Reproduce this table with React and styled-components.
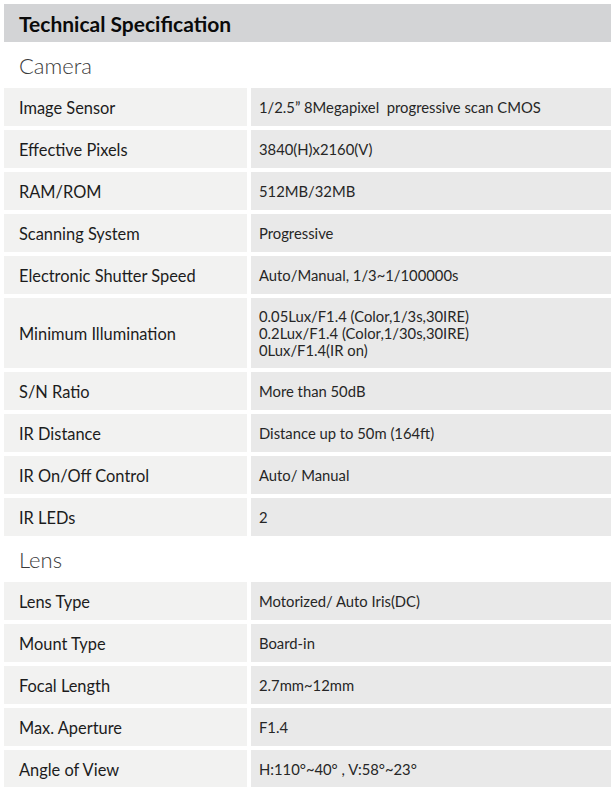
import React from "react";
import styled, { createGlobalStyle } from "styled-components";

const Global = createGlobalStyle`
  html, body { margin: 0; padding: 0; background: #ffffff; }
  body { font-family: Lato, "Open Sans", sans-serif; }
`;

const Page = styled.div`
  width: 611px;
  padding: 4px 0 0 4px;
  box-sizing: border-box;
  display: flex;
  flex-direction: column;
  gap: 4px;
`;

const TitleBar = styled.h1`
  margin: 0;
  height: 38px;
  background: #d3d4d6;
  display: flex;
  align-items: center;
  padding-left: 15px;
  font-family: Lato, sans-serif;
  font-weight: 700;
  font-size: 21px;
  color: #0a0a0a;
`;

const Section = styled.h2`
  margin: 0;
  height: 38px;
  display: flex;
  align-items: center;
  padding-left: 15px;
  font-family: Lato, sans-serif;
  font-weight: 300;
  font-size: 22px;
  color: #3a3a3a;
`;

const Row = styled.div`
  display: grid;
  grid-template-columns: 243px 1fr;
  gap: 4px;
  min-height: ${(p) => (p.$tall ? 70 : 38)}px;
`;

const Label = styled.div`
  background: #f2f2f1;
  display: flex;
  align-items: center;
  padding-left: 15px;
  font-size: 16.4px;
  color: #1c1c1c;
`;

const Value = styled.div`
  background: #e9e9e9;
  display: flex;
  align-items: center;
  padding-left: 8px;
  font-size: 14.8px;
  line-height: 17px;
  color: #262626;
  white-space: pre-line;
`;

const camera = [
  ["Image Sensor", "1/2.5\u201D 8Megapixel\u00A0 progressive scan CMOS"],
  ["Effective Pixels", "3840(H)x2160(V)"],
  ["RAM/ROM", "512MB/32MB"],
  ["Scanning System", "Progressive"],
  ["Electronic Shutter Speed", "Auto/Manual, 1/3~1/100000s"],
  [
    "Minimum Illumination",
    "0.05Lux/F1.4 (Color,1/3s,30IRE)\n0.2Lux/F1.4 (Color,1/30s,30IRE)\n0Lux/F1.4(IR on)",
    true,
  ],
  ["S/N Ratio", "More than 50dB"],
  ["IR Distance", "Distance up to 50m (164ft)"],
  ["IR On/Off Control", "Auto/ Manual"],
  ["IR LEDs", "2"],
];

const lens = [
  ["Lens Type", "Motorized/ Auto Iris(DC)"],
  ["Mount Type", "Board-in"],
  ["Focal Length", "2.7mm~12mm"],
  ["Max. Aperture", "F1.4"],
  ["Angle of View", "H:110\u00B0~40\u00B0 , V:58\u00B0~23\u00B0"],
];

const Rows = ({ items }) =>
  items.map(([k, v, tall]) => (
    <Row key={k} $tall={tall}>
      <Label>{k}</Label>
      <Value>{v}</Value>
    </Row>
  ));

export default function App() {
  return (
    <>
      <Global />
      <Page>
        <TitleBar>Technical Specification</TitleBar>
        <Section>Camera</Section>
        <Rows items={camera} />
        <Section>Lens</Section>
        <Rows items={lens} />
      </Page>
    </>
  );
}
